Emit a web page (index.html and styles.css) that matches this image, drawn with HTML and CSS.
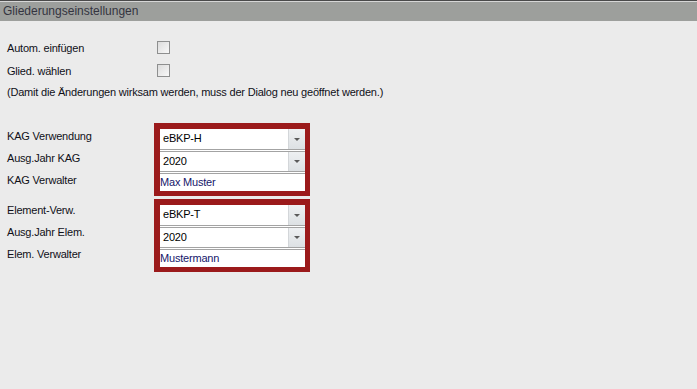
FILE: index.html
```html
<!DOCTYPE html>
<html lang="de">
<head>
<meta charset="utf-8">
<title>Gliederungseinstellungen</title>
<link rel="stylesheet" href="styles.css">
</head>
<body>
<div class="header">Gliederungseinstellungen</div>
<div class="content">
  <div class="check-row">
    <span class="label">Autom. einfügen</span>
    <span class="checkbox"></span>
  </div>
  <div class="check-row">
    <span class="label">Glied. wählen</span>
    <span class="checkbox"></span>
  </div>
  <div class="note">(Damit die Änderungen wirksam werden, muss der Dialog neu geöffnet werden.)</div>

  <div class="group group-first">
    <div class="labels">
      <div class="glabel">KAG Verwendung</div>
      <div class="glabel">Ausg.Jahr KAG</div>
      <div class="glabel">KAG Verwalter</div>
    </div>
    <div class="redbox">
      <div class="inner">
        <div class="combo"><span class="value">eBKP-H</span><span class="drop"><span class="arrow"></span></span></div>
        <div class="combo combo-second"><span class="value">2020</span><span class="drop"><span class="arrow"></span></span></div>
        <div class="field">Max Muster</div>
      </div>
    </div>
  </div>

  <div class="group group-second">
    <div class="labels">
      <div class="glabel">Element-Verw.</div>
      <div class="glabel">Ausg.Jahr Elem.</div>
      <div class="glabel">Elem. Verwalter</div>
    </div>
    <div class="redbox">
      <div class="inner">
        <div class="combo"><span class="value">eBKP-T</span><span class="drop"><span class="arrow"></span></span></div>
        <div class="combo combo-second"><span class="value">2020</span><span class="drop"><span class="arrow"></span></span></div>
        <div class="field">Mustermann</div>
      </div>
    </div>
  </div>
</div>
</body>
</html>
```

FILE: styles.css
```css
html, body {
  margin: 0;
  padding: 0;
}
body {
  width: 697px;
  height: 389px;
  background: #ebebeb;
  font-family: "Liberation Sans", Arial, sans-serif;
  font-size: 11px;
  letter-spacing: -0.2px;
  color: #101018;
  overflow: hidden;
}
.header {
  height: 19px;
  border-top: 1px solid #4a4a4a;
  box-shadow: inset 0 1px 0 #d6d6d6;
  padding-top: 1px;
  background: #9d9f9c;
  color: #34343f;
  font-size: 12px;
  letter-spacing: 0;
  line-height: 18px;
  padding-left: 3px;
}
.content {
  padding: 15px 0 0 7px;
}
.check-row {
  display: flex;
  align-items: center;
  height: 23px;
}
.check-row .label {
  width: 150px;
}
.checkbox {
  width: 11px;
  height: 11px;
  border: 1px solid #8e8f8f;
  background: linear-gradient(135deg, #dcdcdc, #f8f8f8);
}
.note {
  height: 20px;
  line-height: 20px;
}
.group {
  display: flex;
  margin-top: 21px;
}
.group-second {
  margin-top: 3px;
}
.labels {
  width: 147px;
  padding-top: 5px;
}
.group-second .labels {
  padding-top: 3px;
}
.glabel {
  height: 22px;
  line-height: 16px;
}
.redbox {
  width: 145px;
  background: #9b1a1b;
  padding: 6px 5px 5px 6px;
}
.inner {
  background: #fff;
  display: flex;
  flex-direction: column;
  gap: 1px;
}
.combo {
  display: flex;
  height: 20px;
  border-bottom: 1px solid #a3a3a3;
}
.combo-second {
  height: 19px;
  border-top: 1px solid #a3a3a3;
}
.value {
  flex: 1;
  line-height: 19px;
  padding-left: 3px;
  color: #000;
}
.drop {
  width: 16px;
  border-left: 1px solid #d3d6d9;
  background: linear-gradient(#eef0f2, #dde1e4);
  display: flex;
  align-items: center;
  justify-content: center;
}
.arrow {
  width: 0;
  height: 0;
  border-left: 3px solid transparent;
  border-right: 3px solid transparent;
  border-top: 3px solid #5a5a5a;
}
.field {
  border-top: 1px solid #a3a3a3;
  height: 17px;
  line-height: 17px;
  color: #15166a;
}
```
